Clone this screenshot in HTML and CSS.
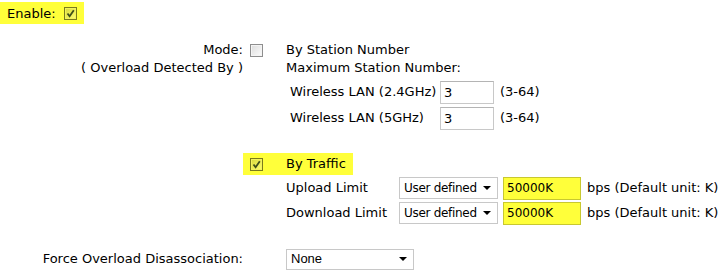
FILE: index.html
```html
<!DOCTYPE html>
<html lang="en">
<head>
  <meta charset="UTF-8" />
  <title>Load Balance</title>
  <link rel="stylesheet" href="styles.css">
</head>
<body>

  <div class="enable">
    <span>Enable:</span>
    <span class="chk on"><svg viewBox="0 0 9 9"><path d="M1.5 4.5 L3.6 7.2 L7.8 1.2" /></svg></span>
  </div>

  <div class="form">
    <div class="lbl">Mode:</div>
    <div class="box"><span class="chk"></span></div>
    <div class="val">By Station Number</div>

    <div class="lbl">( Overload Detected By )</div>
    <div></div>
    <div class="val">Maximum Station Number:</div>

    <div></div>
    <div></div>
    <div class="sub">
      <div class="wl">
        <span class="name">Wireless LAN (2.4GHz)</span>
        <span class="txt">3</span>
        <span>(3-64)</span>
      </div>
      <div class="wl">
        <span class="name">Wireless LAN (5GHz)</span>
        <span class="txt">3</span>
        <span>(3-64)</span>
      </div>
    </div>

    <div class="traffic">
      <span class="hl">
        <span class="chk on"><svg viewBox="0 0 9 9"><path d="M1.5 4.5 L3.6 7.2 L7.8 1.2" /></svg></span>
        <span class="hl-text">By Traffic</span>
      </span>
    </div>

    <div></div>
    <div></div>
    <div class="limits">
      <div class="lim">
        <span class="name">Upload Limit</span>
        <span class="sel">User defined<i></i></span>
        <span class="txt yel">50000K</span>
        <span>bps (Default unit: K)</span>
      </div>
      <div class="lim">
        <span class="name">Download Limit</span>
        <span class="sel">User defined<i></i></span>
        <span class="txt yel">50000K</span>
        <span>bps (Default unit: K)</span>
      </div>
    </div>

    <div class="lbl force">Force Overload Disassociation:</div>
    <div></div>
    <div class="val force"><span class="sel wide">None<i></i></span></div>
  </div>

</body>
</html>
```

FILE: styles.css
```css
body {
  margin: 0;
  font-family: "DejaVu Sans", Verdana, sans-serif;
  font-size: 13px;
  color: #000;
  background: #fff;
}

.enable {
  display: inline-flex;
  align-items: center;
  gap: 8px;
  margin-top: 2px;
  height: 22px;
  padding: 0 7px;
  background: #ffff3a;
}

.chk {
  display: inline-block;
  box-sizing: border-box;
  width: 13px;
  height: 13px;
  border: 1px solid #8e8e8e;
  background: linear-gradient(135deg, #dcdcdc, #fdfdfd);
  box-shadow: inset 0 0 0 1px #f4f4f4;
  vertical-align: middle;
}

.chk.on {
  border-color: #7a7a1c;
  background: linear-gradient(135deg, #d8d83a, #ffff70);
  box-shadow: inset 0 0 0 1px #f2f25a;
}

.chk svg {
  display: block;
  width: 9px;
  height: 9px;
  margin: 1px;
}

.chk path {
  fill: none;
  stroke: #3e4f1a;
  stroke-width: 1.8;
}

.form {
  display: grid;
  grid-template-columns: 243px 43px 1fr;
  margin-top: 17px;
  line-height: 18px;
}

.lbl {
  text-align: right;
  white-space: nowrap;
}

.box {
  padding-left: 7px;
  display: flex;
  align-items: center;
}

.sub {
  padding: 2px 0 0 4px;
}

.wl {
  display: flex;
  align-items: center;
  height: 26px;
}

.wl .name {
  width: 150px;
}

.txt {
  box-sizing: border-box;
  display: inline-block;
  height: 23px;
  line-height: 21px;
  padding: 0 3px;
  border: 1px solid #c8c8c8;
  border-top-color: #b4b4b4;
  background: #fff;
  width: 54px;
  margin-right: 6px;
}

.traffic {
  grid-column: 2 / 4;
  margin-top: 22px;
}

.hl {
  display: inline-flex;
  align-items: center;
  height: 22px;
  padding: 0 7px;
  background: #ffff3a;
}

.hl-text {
  margin-left: 23px;
}

.lim {
  display: flex;
  align-items: center;
  height: 25px;
}

.lim .name {
  width: 113px;
}

.sel {
  box-sizing: border-box;
  display: inline-flex;
  align-items: center;
  justify-content: space-between;
  width: 99px;
  height: 22px;
  padding: 0 6px 0 4px;
  border: 1px solid #c8c8c8;
  background: #fff;
  margin-right: 5px;
  font-size: 12px;
  letter-spacing: -0.3px;
}

.sel i {
  width: 0;
  height: 0;
  border-left: 4px solid transparent;
  border-right: 4px solid transparent;
  border-top: 4px solid #000;
}

.txt.yel {
  width: 78px;
  background: #ffff3a;
  border-color: #c8c830;
  font-size: 12px;
}

.force {
  margin-top: 23px;
  display: flex;
  align-items: center;
  justify-content: flex-end;
  height: 21px;
}

.val.force {
  justify-content: flex-start;
}

.sel.wide {
  width: 128px;
  height: 21px;
  font-family: "Liberation Sans", Arial, sans-serif;
  font-size: 13px;
  letter-spacing: 0;
}
```
